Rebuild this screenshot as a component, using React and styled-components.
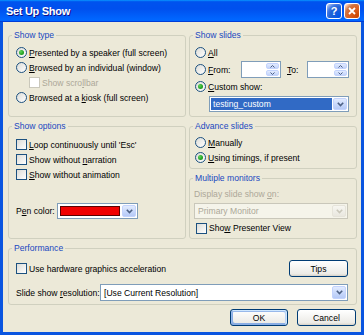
import React from 'react';
import styled, { createGlobalStyle } from 'styled-components';

const Global = createGlobalStyle`
  html, body { margin: 0; padding: 0; background: #ffffff; }
  body { font-family: "Liberation Sans", Arial, sans-serif; font-size: 8.6px; color: #000; }
  * { box-sizing: border-box; }
`;

const Window = styled.div`
  width: 364px;
  height: 335px;
  display: flex;
  flex-direction: column;
`;

const TitleBar = styled.div`
  height: 22px;
  flex: none;
  display: flex;
  align-items: center;
  padding: 0 4px 0 6px;
  background: linear-gradient(180deg, #0997ff, #0053ee 8%, #0050ee 40%, #0066ff 88%, #0066ff 93%, #005bff 95%, #003dd7 96%, #003dd7);
`;

const Title = styled.div`
  flex: 1;
  color: #fff;
  font-weight: bold;
  font-size: 11px;
  letter-spacing: -0.3px;
  text-shadow: 1px 1px #0f1089;
`;

const TitleButtons = styled.div`
  display: flex;
  gap: 2px;
`;

const CaptionButton = styled.div`
  width: 16px;
  height: 16px;
  border: 1px solid #fff;
  border-radius: 3px;
  display: flex;
  align-items: center;
  justify-content: center;
  color: #fff;
  font-weight: bold;
  font-size: 11px;
  background: ${p => p.$close
    ? 'radial-gradient(circle at 90% 90%, #cc4600 0%, #dc6527 55%, #cd7546 70%, #ffccb2 90%, #fff 100%)'
    : 'radial-gradient(circle at 90% 90%, #0054e9 0%, #2263d5 55%, #4479e4 70%, #a3bbec 90%, #fff 100%)'};
`;

const Body = styled.div`
  flex: 1;
  background: #ece9d8;
  border: 3px solid #0a55e0;
  border-top: 0;
  padding: 8px 4px 6px 5px;
  display: flex;
  flex-direction: column;
  gap: 4px;
`;

const TopGrid = styled.div`
  display: grid;
  grid-template-columns: 178px 1fr;
  grid-template-rows: 87px 118px;
  column-gap: 3px;
  row-gap: 4px;
`;

const Stack = styled.div`
  display: flex;
  flex-direction: column;
  gap: 4px;
  min-height: 0;
`;

const Group = styled.fieldset`
  margin: 0;
  padding: 0;
  min-width: 0;
  border: 1px solid #d0d0bf;
  border-radius: 3px;
  ${p => p.$h ? `height: ${p.$h}px; flex: none;` : 'flex: 1;'}
`;

const Legend = styled.legend`
  padding: 0 2px;
  margin-left: 3px;
  color: #1a48c0;
  font-size: 8.6px;
  line-height: 10px;
`;

const Content = styled.div`
  display: flex;
  flex-direction: column;
  padding: ${p => p.$pad};
`;

const Row = styled.div`
  display: flex;
  align-items: center;
  height: ${p => p.$h || 15}px;
  margin-top: ${p => p.$mt || 0}px;
  padding-left: ${p => p.$pl || 0}px;
  flex: none;
`;

const Text = styled.span`
  white-space: nowrap;
  color: ${p => p.$disabled ? '#aca899' : '#000'};
  width: ${p => p.$w ? `${p.$w}px` : 'auto'};
  padding-left: ${p => p.$pl || 0}px;
  flex: none;
  u { text-decoration-thickness: 1px; text-underline-offset: 1px; }
`;

const RadioCircle = styled.span`
  width: 11px;
  height: 11px;
  border-radius: 50%;
  border: 1px solid #1c5180;
  background: linear-gradient(135deg, #dcdcd7, #ffffff);
  display: inline-flex;
  align-items: center;
  justify-content: center;
  flex: none;
  margin-right: 2px;
  &::after {
    content: '';
    width: 5px;
    height: 5px;
    border-radius: 50%;
    background: radial-gradient(circle at 35% 35%, #5fd35b, #21a121 60%, #1a8a1a);
    display: ${p => p.$checked ? 'block' : 'none'};
  }
`;

const CheckBox = styled.span`
  width: 11px;
  height: 11px;
  border: 1px solid ${p => p.$disabled ? '#cac8bb' : '#1c5180'};
  background: ${p => p.$disabled ? '#fff' : 'linear-gradient(135deg, #dcdcd7, #ffffff)'};
  flex: none;
  margin-right: 2px;
`;

const SelectBox = styled.div`
  display: flex;
  height: ${p => p.$h || 16}px;
  width: ${p => p.$w ? `${p.$w}px` : 'auto'};
  flex: ${p => p.$w ? 'none' : '1'};
  margin-left: ${p => p.$ml || 0}px;
  border: 1px solid ${p => p.$disabled ? '#c9c7ba' : '#7f9db9'};
  background: ${p => p.$disabled ? '#f5f4ea' : '#fff'};
  padding: 1px;
  gap: 1px;
`;

const SelectValue = styled.div`
  flex: 1;
  display: flex;
  align-items: center;
  padding-left: 2px;
  white-space: nowrap;
  overflow: hidden;
  background: ${p => p.$selected ? '#316ac5' : 'transparent'};
  color: ${p => p.$selected ? '#fff' : p.$disabled ? '#aca899' : '#000'};
`;

const Swatch = styled.div`
  flex: 1;
  margin: 1px;
  background: #f00000;
  border: 1px solid #5a0000;
`;

const DropButton = styled.div`
  width: 14px;
  flex: none;
  border-radius: 2px;
  display: flex;
  align-items: center;
  justify-content: center;
  border: 1px solid ${p => p.$disabled ? '#e6e4da' : '#c3d3fd'};
  background: ${p => p.$disabled
    ? 'linear-gradient(180deg, #f7f6f1, #e9e7df)'
    : 'linear-gradient(180deg, #e2ebfe 0%, #c8d8fb 55%, #b6caf7 100%)'};
`;

const SpinBox = styled.div`
  display: flex;
  justify-content: flex-end;
  height: 17px;
  width: ${p => p.$w}px;
  flex: none;
  border: 1px solid #7f9db9;
  background: #fff;
  padding: 1px;
`;

const SpinButtons = styled.div`
  width: 13px;
  display: flex;
  flex-direction: column;
  gap: 1px;
`;

const SpinHalf = styled.div`
  flex: 1;
  border-radius: 2px;
  display: flex;
  align-items: center;
  justify-content: center;
  border: 1px solid #c3d3fd;
  background: linear-gradient(180deg, #e2ebfe, #c2d3fa);
`;

const Button = styled.button`
  font: inherit;
  font-size: 8.6px;
  height: 17px;
  width: ${p => p.$w}px;
  flex: none;
  padding: 0;
  color: #000;
  border: 1px solid #003c74;
  border-radius: 3px;
  margin-left: ${p => p.$ml || '0'};
  background: linear-gradient(180deg, #ffffff, #ecebe6 86%, #d6d0c5);
  box-shadow: ${p => p.$default
    ? 'inset -1px 1px #cee7ff, inset 1px 2px #98b8ea, inset -2px 2px #bcd4f6, inset 1px -1px #89ade4, inset 2px -2px #89ade4'
    : 'none'};
`;

const ButtonRow = styled.div`
  display: flex;
  justify-content: flex-end;
  gap: 9px;
  height: 17px;
  padding-right: 1px;
  flex: none;
`;

const Chevron = ({ color = '#4d6185' }) => (
  <svg width="7" height="5" viewBox="0 0 7 5">
    <path d="M0.8 0.8 L3.5 3.6 L6.2 0.8" fill="none" stroke={color} strokeWidth="1.6" />
  </svg>
);

const SmallArrow = ({ up }) => (
  <svg width="5" height="3" viewBox="0 0 5 3">
    <path d={up ? 'M0.5 2.5 L2.5 0.5 L4.5 2.5' : 'M0.5 0.5 L2.5 2.5 L4.5 0.5'} fill="none" stroke="#4d6185" strokeWidth="1" />
  </svg>
);

const Radio = ({ checked, children }) => (
  <>
    <RadioCircle $checked={checked} />
    <Text>{children}</Text>
  </>
);

const Check = ({ disabled, children }) => (
  <>
    <CheckBox $disabled={disabled} />
    <Text $disabled={disabled}>{children}</Text>
  </>
);

const Spin = ({ w }) => (
  <SpinBox $w={w}>
    <SpinButtons>
      <SpinHalf><SmallArrow up /></SpinHalf>
      <SpinHalf><SmallArrow /></SpinHalf>
    </SpinButtons>
  </SpinBox>
);

export default function App() {
  return (
    <>
      <Global />
      <Window>
        <TitleBar>
          <Title>Set Up Show</Title>
          <TitleButtons>
            <CaptionButton>?</CaptionButton>
            <CaptionButton $close>
              <svg width="8" height="8" viewBox="0 0 8 8">
                <path d="M1 1 L7 7 M7 1 L1 7" stroke="#fff" strokeWidth="1.8" />
              </svg>
            </CaptionButton>
          </TitleButtons>
        </TitleBar>
        <Body>
          <TopGrid>
            <Group>
              <Legend>Show type</Legend>
              <Content $pad="5px 0 0 7px">
                <Row><Radio checked><u>P</u>resented by a speaker (full screen)</Radio></Row>
                <Row><Radio><u>B</u>rowsed by an individual (window)</Radio></Row>
                <Row $pl={13}><Check disabled>Show scro<u>l</u>lbar</Check></Row>
                <Row><Radio>Browsed at a <u>k</u>iosk (full screen)</Radio></Row>
              </Content>
            </Group>
            <Group>
              <Legend>Show slides</Legend>
              <Content $pad="4px 8px 0 5px">
                <Row $h={17}><Radio><u>A</u>ll</Radio></Row>
                <Row $h={17}>
                  <RadioCircle />
                  <Text $w={33}><u>F</u>rom:</Text>
                  <Spin w={40} />
                  <Text $w={26} $pl={6}><u>T</u>o:</Text>
                  <Spin w={42} />
                </Row>
                <Row $h={17}><Radio checked><u>C</u>ustom show:</Radio></Row>
                <Row $h={16} $mt={1}>
                  <SelectBox $ml={14} $h={16} $w={140}>
                    <SelectValue $selected>testing_custom</SelectValue>
                    <DropButton><Chevron /></DropButton>
                  </SelectBox>
                </Row>
              </Content>
            </Group>
            <Group>
              <Legend>Show options</Legend>
              <Content $pad="6px 0 0 7px">
                <Row><Check><u>L</u>oop continuously until 'Esc'</Check></Row>
                <Row><Check>Show without <u>n</u>arration</Check></Row>
                <Row><Check><u>S</u>how without animation</Check></Row>
                <Row $h={16} $mt={21}>
                  <Text $w={41}>P<u>e</u>n color:</Text>
                  <SelectBox $h={16} $w={81}>
                    <Swatch />
                    <DropButton><Chevron /></DropButton>
                  </SelectBox>
                </Row>
              </Content>
            </Group>
            <Stack>
              <Group $h={48}>
                <Legend>Advance slides</Legend>
                <Content $pad="4px 0 0 5px">
                  <Row><Radio><u>M</u>anually</Radio></Row>
                  <Row><Radio checked><u>U</u>sing timings, if present</Radio></Row>
                </Content>
              </Group>
              <Group>
                <Legend>Multiple monitors</Legend>
                <Content $pad="5px 8px 0 4px">
                  <Row $h={12}><Text $disabled>Display slide show <u>o</u>n:</Text></Row>
                  <Row $h={16} $mt={3}>
                    <SelectBox $disabled $h={16}>
                      <SelectValue $disabled>Primary Monitor</SelectValue>
                      <DropButton $disabled><Chevron color="#c9c7ba" /></DropButton>
                    </SelectBox>
                  </Row>
                  <Row $h={14} $mt={2} $pl={2}><Check>Sho<u>w</u> Presenter View</Check></Row>
                </Content>
              </Group>
            </Stack>
          </TopGrid>
          <Group $h={62}>
            <Legend>Performance</Legend>
            <Content $pad="7px 8px 0 7px">
              <Row $h={17}>
                <Check>Use hardware graphics acceleration</Check>
                <Button $w={59} $ml="auto">Tips</Button>
              </Row>
              <Row $h={17} $mt={7}>
                <Text $w={84}>Slide show <u>r</u>esolution:</Text>
                <SelectBox $h={17}>
                  <SelectValue>[Use Current Resolution]</SelectValue>
                  <DropButton><Chevron /></DropButton>
                </SelectBox>
              </Row>
            </Content>
          </Group>
          <ButtonRow>
            <Button $w={58} $default>OK</Button>
            <Button $w={59}>Cancel</Button>
          </ButtonRow>
        </Body>
      </Window>
    </>
  );
}
